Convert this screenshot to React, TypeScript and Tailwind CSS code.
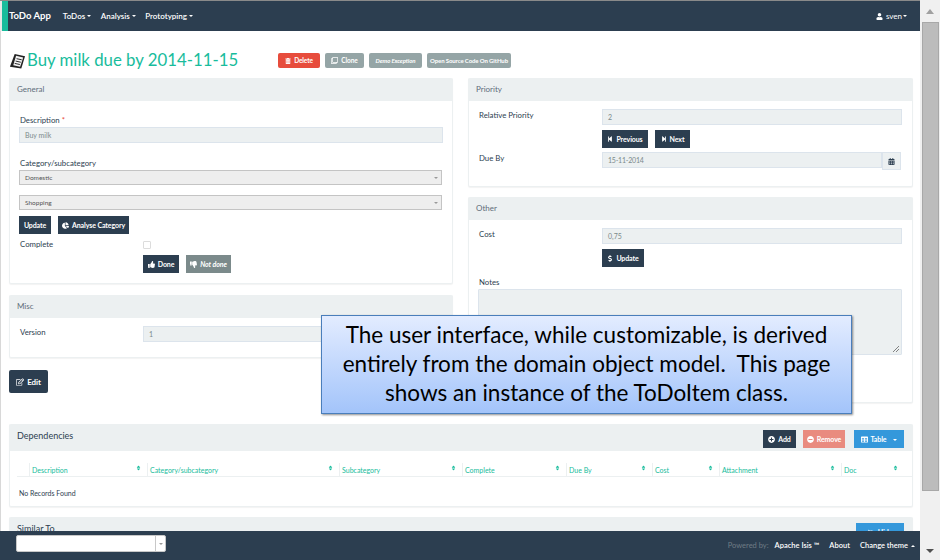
import React from 'react';
import {
  FaCalendarAlt,
  FaChartPie,
  FaDollarSign,
  FaEyeSlash,
  FaMinusCircle,
  FaPlusCircle,
  FaRegClone,
  FaRegEdit,
  FaSort,
  FaStepBackward,
  FaStepForward,
  FaTable,
  FaThumbsDown,
  FaThumbsUp,
  FaTrashAlt,
  FaUser,
} from 'react-icons/fa';

const navy = 'bg-[#2c3e50] text-white';

function Caret({ up, className = '' }: { up?: boolean; className?: string }) {
  return (
    <span
      className={`inline-block w-0 h-0 border-x-[2px] border-x-transparent ${
        up ? 'border-b-[2px] border-b-current' : 'border-t-[2px] border-t-current'
      } ${className}`}
    />
  );
}

function Btn({
  color = navy,
  w,
  h = 'h-[18px]',
  icon,
  children,
  className = '',
}: {
  color?: string;
  w: string;
  h?: string;
  icon?: React.ReactNode;
  children: React.ReactNode;
  className?: string;
}) {
  return (
    <div
      className={`${color} ${w} ${h} shrink-0 flex items-center justify-center gap-[3px] text-[7px] font-bold tracking-[-0.1px] ${className}`}
    >
      {icon}
      <span>{children}</span>
    </div>
  );
}

function Panel({
  title,
  headH = 'h-[23px]',
  titleClass = 'text-[8px] text-[#5f6d7a] -mt-[2px]',
  right,
  className = '',
  children,
}: {
  title: string;
  headH?: string;
  titleClass?: string;
  right?: React.ReactNode;
  className?: string;
  children?: React.ReactNode;
}) {
  return (
    <section className={`bg-white rounded-[2px] border-x border-b border-[#ecf0f1] shadow-[0_1px_1px_rgba(0,0,0,0.05)] ${className}`}>
      <div className={`${headH} -mx-px bg-[#ecf0f1] rounded-t-[2px] flex items-center justify-between pl-[8px] pr-[9px]`}>
        <span className={titleClass}>{title}</span>
        {right}
      </div>
      {children}
    </section>
  );
}

function Field({ value, className = '' }: { value: string; className?: string }) {
  return (
    <div className={`h-[16px] bg-[#ecf0f1] border border-[#dce4ec] flex items-center pl-[5px] text-[7px] text-[#7b8a8b] ${className}`}>
      {value}
    </div>
  );
}

function Select({ value }: { value: string }) {
  return (
    <div className="h-[15px] w-[423px] bg-[#eeeeee] border border-[#c4c4c4] flex items-center justify-between pl-[5px] pr-[3px] text-[6.5px] text-[#555]">
      <span>{value}</span>
      <Caret className="text-[#999]" />
    </div>
  );
}

function Label({ children, className = '' }: { children: React.ReactNode; className?: string }) {
  return <div className={`text-[7.8px] leading-[10px] text-[#2c3e50] ${className}`}>{children}</div>;
}

const columns = [
  { name: '', w: 'w-[12px]' },
  { name: 'Description', w: 'w-[118px]' },
  { name: 'Category/subcategory', w: 'w-[192px]' },
  { name: 'Subcategory', w: 'w-[123px]' },
  { name: 'Complete', w: 'w-[104px]' },
  { name: 'Due By', w: 'w-[86px]' },
  { name: 'Cost', w: 'w-[67px]' },
  { name: 'Attachment', w: 'w-[122px]' },
  { name: 'Doc', w: 'w-[63px]' },
];

export default function App() {
  return (
    <div className="w-[940px] h-[560px] overflow-hidden flex bg-white font-['Lato',sans-serif]">
      <div className="w-[920px] h-full flex flex-col relative border-t border-[#8a8a8a]">
        <header className="h-[30px] shrink-0 bg-[#2c3e50] text-white flex items-center">
          <div className="w-[2px] h-full bg-[#e8e8e8]" />
          <div className="w-[6px] h-full bg-[#18bc9c]" />
          <span className="ml-px text-[9.5px] font-bold">ToDo App</span>
          <nav className="flex items-center text-[8px] font-semibold ml-[12px] gap-[9.5px]">
            <span className="flex items-center gap-[2px]">ToDos <Caret /></span>
            <span className="flex items-center gap-[2px]">Analysis <Caret /></span>
            <span className="flex items-center gap-[2px]">Prototyping <Caret /></span>
          </nav>
          <div className="ml-auto mr-[13px] flex items-center gap-[3px] text-[8px]">
            <FaUser className="w-[7px] h-[7px]" />
            <span className="flex items-center gap-px">sven <Caret /></span>
          </div>
        </header>

        <main className="flex-1 overflow-hidden border-l border-[#d8d8d8] pl-[8px] pr-[7px]">
          <div className="h-[47px] flex items-end pb-[8px]">
            <svg viewBox="0 0 18 18" className="w-[17px] h-[17px]">
              <path d="M6 1 L17 3.5 L13 16.5 L1 14.5 Z" fill="#222" />
              <path d="M7.5 3 L15 4.8 L11.8 14.5 L4.5 13 Z" fill="#f4f4f4" />
              <path d="M8 6 L13.5 7.2 M7 8.5 L12.5 9.8 M6 11 L11.5 12.2" stroke="#222" strokeWidth="1" />
            </svg>
            <h1 className="ml-px w-[211px] whitespace-nowrap text-[16.8px] leading-[20px] text-[#18bc9c]">Buy milk due by 2014-11-15</h1>
            <div className="flex ml-[40px] gap-[5px] mb-[2px]">
              <Btn color="bg-[#e74c3c] text-white" w="w-[42px]" h="h-[15px]" icon={<FaTrashAlt className="w-[6px] h-[6px]" />} className="!text-[6.5px] rounded-[2px]">Delete</Btn>
              <Btn color="bg-[#95a5a6] text-white" w="w-[39px]" h="h-[15px]" icon={<FaRegClone className="w-[7px] h-[7px]" />} className="!text-[6.5px] rounded-[2px]">Clone</Btn>
              <Btn color="bg-[#95a5a6] text-white" w="w-[53px]" h="h-[15px]" className="!text-[6px] italic rounded-[2px]">Demo Exception</Btn>
              <Btn color="bg-[#95a5a6] text-white" w="w-[84px]" h="h-[15px]" className="!text-[6px] rounded-[2px]">Open Source Code On GitHub</Btn>
            </div>
          </div>

          <div className="flex gap-[15px]">
            <div className="w-[444px] flex flex-col">
              <Panel title="General" className="h-[206px]">
                <div className="pl-[9px] pt-[14px]">
                  <Label className="ml-px">Description <span className="text-[#e74c3c]">*</span></Label>
                  <Field value="Buy milk" className="w-[424px] mt-[2px]" />
                  <Label className="mt-[15px] mb-[2px] ml-px">Category/subcategory</Label>
                  <Select value="Domestic" />
                  <div className="h-[10px]" />
                  <Select value="Shopping" />
                  <div className="flex gap-[7px] mt-[6px]">
                    <Btn w="w-[32px]">Update</Btn>
                    <Btn w="w-[71px]" icon={<FaChartPie className="w-[7px] h-[7px]" />}>Analyse Category</Btn>
                  </div>
                  <div className="flex mt-[5px]">
                    <Label className="w-[124px] pl-px">Complete</Label>
                    <div>
                      <div className="w-[8px] h-[8px] mt-[2px] border border-[#dcdcdc] rounded-[1px]" />
                      <div className="flex gap-[7px] mt-[6px]">
                        <Btn w="w-[36px]" icon={<FaThumbsUp className="w-[7px] h-[7px]" />}>Done</Btn>
                        <Btn color="bg-[#7b8a8b] text-white" w="w-[45px]" icon={<FaThumbsDown className="w-[7px] h-[7px]" />} className="italic">Not done</Btn>
                      </div>
                    </div>
                  </div>
                </div>
              </Panel>
              <Panel title="Misc" className="h-[63px] mt-[11px]">
                <div className="flex pl-[10px] pt-[8px]">
                  <Label className="w-[123px] pt-[1px]">Version</Label>
                  <Field value="1" className="w-[300px]" />
                </div>
              </Panel>
              <Btn w="w-[39px]" h="h-[23px]" icon={<FaRegEdit className="w-[8px] h-[8px]" />} className="mt-[12px] rounded-[2px] !text-[8px]">Edit</Btn>
            </div>

            <div className="w-[445px] flex flex-col">
              <Panel title="Priority" className="h-[109px]">
                <div className="pl-[10px] pt-[8px]">
                  <div className="flex">
                    <Label className="w-[123px] pt-[1px]">Relative Priority</Label>
                    <div>
                      <Field value="2" className="w-[300px]" />
                      <div className="flex gap-[7px] mt-[5px]">
                        <Btn w="w-[46px]" icon={<FaStepBackward className="w-[6px] h-[6px]" />}>Previous</Btn>
                        <Btn w="w-[35px]" icon={<FaStepForward className="w-[6px] h-[6px]" />}>Next</Btn>
                      </div>
                    </div>
                  </div>
                  <div className="flex mt-[4px]">
                    <Label className="w-[123px] pt-[1px]">Due By</Label>
                    <Field value="15-11-2014" className="w-[280px] tracking-[-0.2px]" />
                    <div className="w-[19px] h-[18px] bg-[#ecf0f1] border border-[#dce4ec] flex items-center justify-center text-[#2c3e50]">
                      <FaCalendarAlt className="w-[7px] h-[7px]" />
                    </div>
                  </div>
                </div>
              </Panel>
              <Panel title="Other" className="h-[206px] mt-[10px]">
                <div className="pl-[10px] pt-[8px]">
                  <div className="flex">
                    <Label className="w-[123px] pt-[1px]">Cost</Label>
                    <div>
                      <Field value="0,75" className="w-[300px]" />
                      <Btn w="w-[42px]" className="mt-[5px]" icon={<FaDollarSign className="w-[6px] h-[7px]" />}>Update</Btn>
                    </div>
                  </div>
                  <Label className="mt-[10px]">Notes</Label>
                  <div className="w-[424px] h-[66px] mt-[2px] -ml-px bg-[#ecf0f1] border border-[#dce4ec] rounded-[1px] flex items-end justify-end p-px">
                    <svg viewBox="0 0 8 8" className="w-[8px] h-[8px]">
                      <path d="M1 7 L7 1 M4 7 L7 4" stroke="#666" strokeWidth="0.8" />
                    </svg>
                  </div>
                </div>
              </Panel>
            </div>
          </div>

          <Panel
            title="Dependencies"
            headH="h-[27px]"
            titleClass="text-[9px] text-[#2c3e50] -mt-[3px]"
            className="h-[83px] mt-[21px]"
            right={
              <div className="flex mt-[3px]">
                <Btn w="w-[33px]" icon={<FaPlusCircle className="w-[7px] h-[7px]" />}>Add</Btn>
                <Btn color="bg-[#e98b7f] text-white" w="w-[42px]" className="ml-[7px]" icon={<FaMinusCircle className="w-[7px] h-[7px]" />}>Remove</Btn>
                <Btn color="bg-[#3498db] text-white" w="w-[50px]" className="ml-[9px]" icon={<FaTable className="w-[7px] h-[7px]" />}>
                  <span className="mr-[7px]">Table</span>
                  <Caret className="align-middle" />
                </Btn>
              </div>
            }
          >
            <div className="flex mt-[12px] ml-[7px] h-[14px] border-b border-[#ecf0f1]">
              {columns.map((c, i) => (
                <div key={i} className={`${c.w} shrink-0 relative flex items-center pl-[2px] pt-[1px] text-[7px] text-[#18bc9c] ${i > 0 ? 'border-l border-[#ecf0f1]' : ''}`}>
                  {c.name}
                  {c.name && <FaSort className="absolute right-[6px] top-[2px] w-[5px] h-[6px]" />}
                </div>
              ))}
            </div>
            <div className="text-[7px] leading-[10px] text-[#2c3e50] pl-[9px] mt-[11px]">No Records Found</div>
          </Panel>

          <Panel
            title="Similar To"
            headH="h-[27px]"
            titleClass="text-[9px] text-[#2c3e50] -mt-[3px]"
            className="h-[27px] mt-[10px]"
            right={
              <Btn color="bg-[#3498db] text-white" w="w-[48px]" className="mt-[3px]" icon={<FaEyeSlash className="w-[7px] h-[7px]" />}>Hide</Btn>
            }
          />
        </main>

        <footer className="h-[29px] shrink-0 bg-[#2c3e50] flex items-center pl-[16px] pr-[5px] text-[7.5px] text-white">
          <div className="w-[150px] h-[17px] bg-white border border-[#c8c8c8] rounded-[2px] flex justify-end -mt-[4px]">
            <div className="w-[10px] border-l border-[#c8c8c8] flex items-center justify-center text-[#999]">
              <Caret />
            </div>
          </div>
          <span className="ml-auto text-[#6f7c85]">Powered by:</span>
          <span className="ml-[6px] font-semibold">Apache Isis ™</span>
          <span className="ml-[10px] font-semibold">About</span>
          <span className="ml-[10px] font-semibold flex items-center gap-[3px]">Change theme <Caret up /></span>
        </footer>

        <div className="absolute left-[321px] top-[314px] w-[531px] h-[99px] border border-[#4a7ebb] bg-gradient-to-b from-[#e3ecff] to-[#a3c4fa] shadow-[1px_1px_2px_rgba(0,0,0,0.45)] flex items-center justify-center text-center text-[22.5px] leading-[29px] pb-[2px] text-black">
          <p className="whitespace-pre">{'The user interface, while customizable, is derived\nentirely from the domain object model.  This page\nshows an instance of the ToDoItem class.'}</p>
        </div>
      </div>

      <aside className="w-[20px] h-full bg-[#f0f0f0] flex flex-col items-center">
        <div className="h-[22px] flex items-center justify-center">
          <span className="w-0 h-0 border-x-[4px] border-x-transparent border-b-[5px] border-b-[#a0a0a0]" />
        </div>
        <div className="w-[17px] h-[469px] bg-[#bcbcbc] border border-[#a8a8a8]" />
        <div className="flex-1 flex items-end pb-[7px]">
          <span className="w-0 h-0 border-x-[4px] border-x-transparent border-t-[4px] border-t-[#505050]" />
        </div>
      </aside>
    </div>
  );
}
